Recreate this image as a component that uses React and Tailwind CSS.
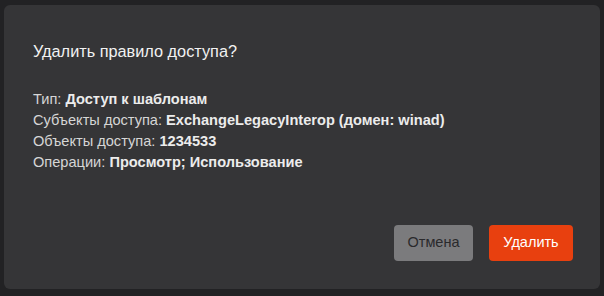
export default function App() {
  const rows = [
    ["Тип:", "Доступ к шаблонам"],
    ["Субъекты доступа:", "ExchangeLegacyInterop (домен: winad)"],
    ["Объекты доступа:", "1234533"],
    ["Операции:", "Просмотр; Использование"],
  ];

  return (
    <div className="h-[296px] w-[604px] bg-[#222224] pt-[5px] pr-[4px] pl-[4px] pb-[7px] font-['Liberation_Sans',Arial,sans-serif]">
      <div className="flex h-full flex-col rounded-[6px] bg-[#353537] pt-[36px] pr-[27px] pb-[28px] pl-[29px]">
        <h3 className="text-[16.3px] leading-[20px] text-[#f2f2f2]">
          Удалить правило доступа?
        </h3>
        <div className="mt-[28px] flex flex-col text-[14.6px] leading-[21px] text-[#d6d6d6]">
          {rows.map(([label, value]) => (
            <p key={label}>
              {label} <span className="font-bold text-[#ececec]">{value}</span>
            </p>
          ))}
        </div>
        <div className="mt-auto flex justify-end gap-[16px]">
          <button
            type="button"
            className="h-[36px] w-[79px] rounded-[4px] bg-[#7b7b7d] text-[14.5px] text-[#2a2a2c]"
          >
            Отмена
          </button>
          <button
            type="button"
            className="h-[36px] w-[84px] rounded-[4px] bg-[#e8400f] text-[14.5px] text-white"
          >
            Удалить
          </button>
        </div>
      </div>
    </div>
  );
}
